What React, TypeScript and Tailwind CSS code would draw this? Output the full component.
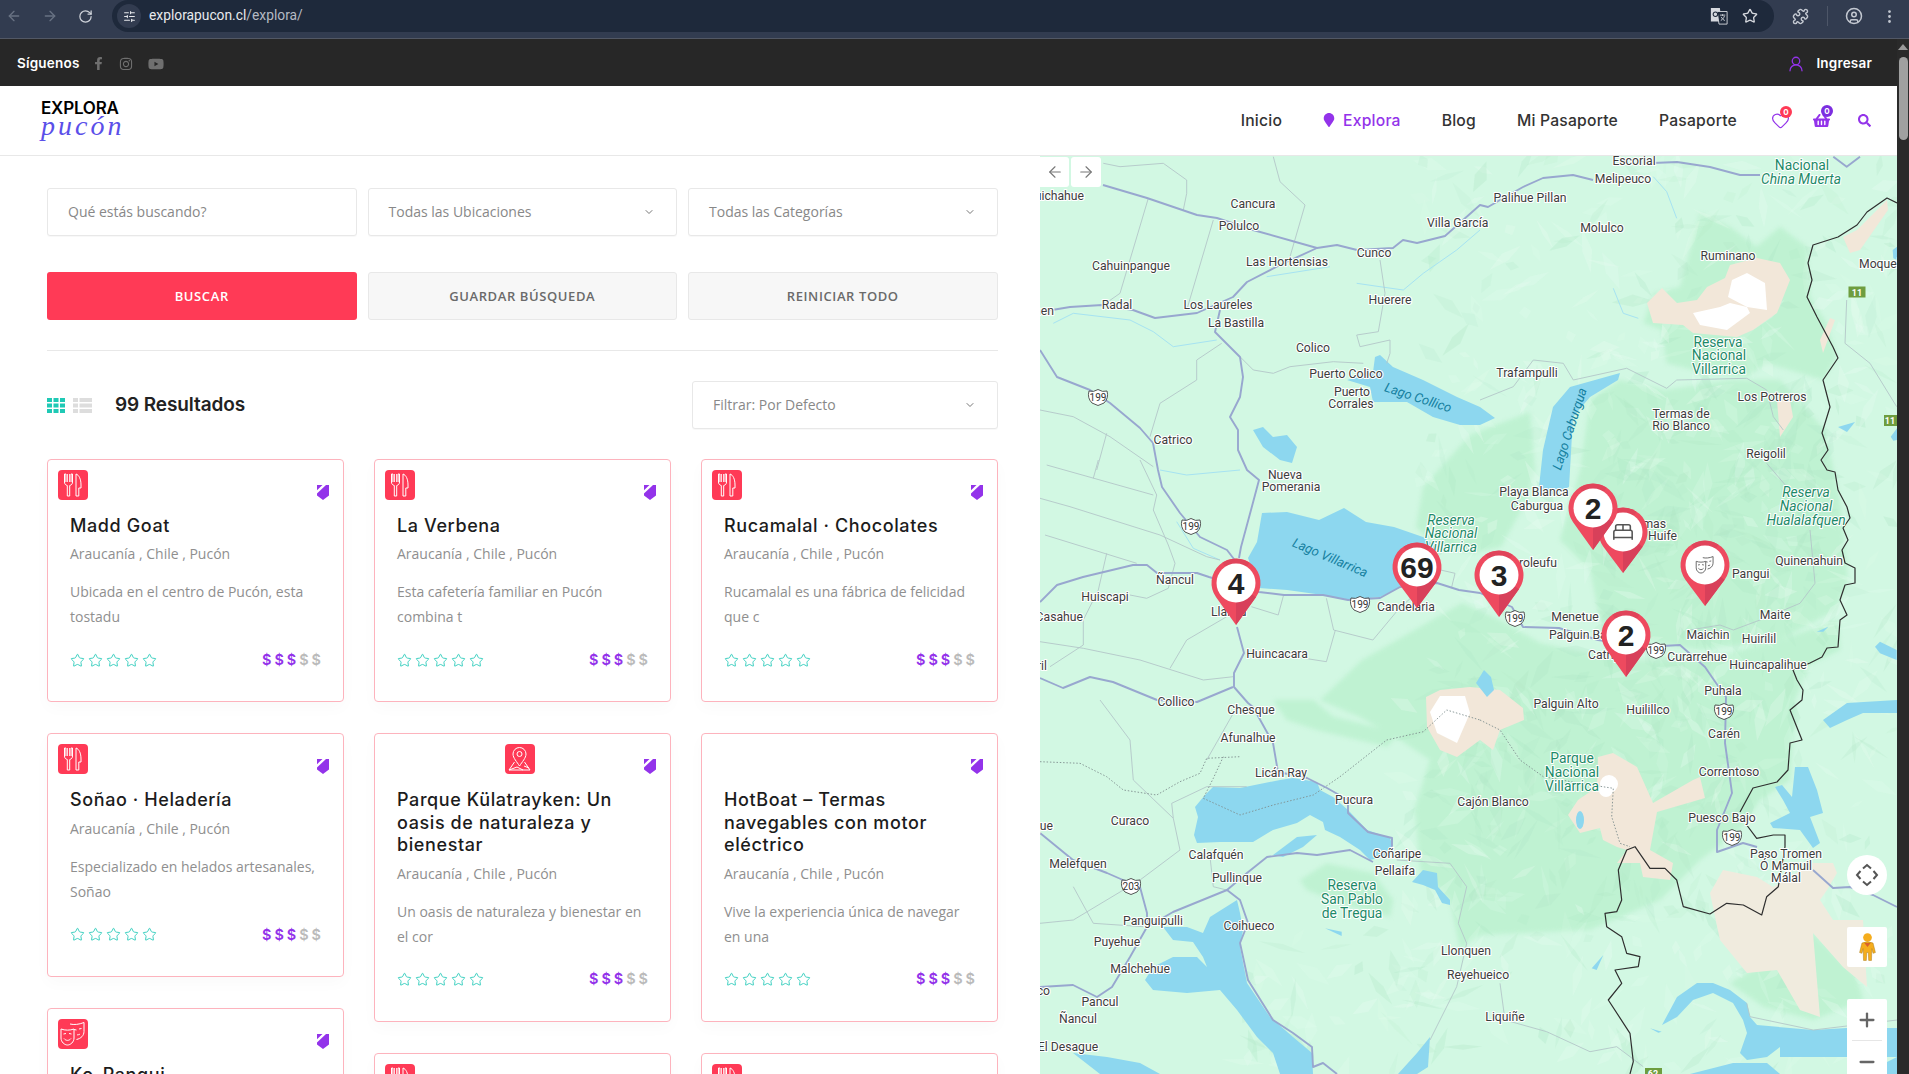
import React from "react";
import { ArrowLeft, ArrowRight, RotateCw, SlidersHorizontal, Star, Puzzle, CircleUser, EllipsisVertical, UserRound, Heart, ChevronDown, Plus, Minus, BedDouble } from "lucide-react";
import { FaFacebookF, FaInstagram, FaYoutube, FaMapMarker, FaShoppingBasket, FaSearch } from "react-icons/fa";

const z = (ox: number, oy: number, s: number, p: string, sy?: number) =>
  p.trim().split(/\s+/).map((t) => {
    const [a, b] = t.split(",").map(Number);
    return `${(ox + a / s).toFixed(1)},${(oy + b / (sy ?? s)).toFixed(1)}`;
  }).join(" ");

/* ---------- small drawn icons ---------- */
const Fork = () => (
  <svg viewBox="0 0 30 30" className="w-[30px] h-[30px]" fill="none" stroke="white" strokeWidth="1">
    <path d="M6.5 4v8c0 2 1 3 2.800 3.500V26h2.400V15.500c1.800-.5 2.800-1.500 2.800-3.500V4h-1.400v8M9.300 4v8M11.700 4v8M6.500 4h1.400v8" />
    <path d="M18 4c3 1 5 5 5 11v3h-2.200v8H18z" />
  </svg>
);
const MapTile = () => (
  <svg viewBox="0 0 30 30" className="w-[30px] h-[30px]" fill="none" stroke="white" strokeWidth="1">
    <path d="M14.500 3.500a6.500 6.500 0 0 1 6.500 6.500c0 4-4 8-6.500 12-2.500-4-6.500-8-6.500-12a6.500 6.500 0 0 1 6.500-6.500z" />
    <circle cx="14.500" cy="10" r="2.500" />
    <path d="M9.500 18L4 26h21l-5.500-8M4 26l8-3 6 3M19 22l5 2" />
  </svg>
);
const Masks = ({ c = "white", w = 1 }: { c?: string; w?: number }) => (
  <svg viewBox="0 0 30 30" className="w-full h-full" fill="none" stroke={c} strokeWidth={w}>
    <path d="M3 10c4 1.500 9 1.500 13 0v9c0 4-3.500 7-6.500 7S3 23 3 19z" />
    <path d="M5.500 15l2.500-.5M11 14.500l2.500.5M6 19.500c2 2.500 5 2.500 7 0" />
    <path d="M12 5c4 1 9 .5 14-1.500v9c0 4-3 7-7.500 8M16 10.500l2.500.5M21 10l2.500-.5M19 16c1-.5 2 0 3-1" />
  </svg>
);
const Shield = () => (
  <svg viewBox="0 0 12 15" className="absolute right-[14px] top-[25px] w-[12px] h-[15px]">
    <path d="M0 0h12v10.500L6 15 0 10.500z" fill="#9333ea" />
    <path d="M5.500 0H9L0 8.500V5.200z" fill="white" />
  </svg>
);
const Prices = () => (
  <div className="flex gap-[4px] font-['Inter',sans-serif] font-semibold text-[14.500px] leading-none">
    {[0, 1, 2, 3, 4].map((i) => (
      <span key={i} className={i < 3 ? "w-[8.400px] text-center text-[#9333ea]" : "w-[8.400px] text-center text-[#bbbbbb]"}>$</span>
    ))}
  </div>
);
const Stars = () => (
  <div className="flex gap-[3px]">
    {[0, 1, 2, 3, 4].map((i) => (
      <Star key={i} size={15} strokeWidth={1.400} className="text-[#25c9b8]" />
    ))}
  </div>
);

type CardT = { t: string; d: string; icon?: "f" | "m" | "t"; ml?: boolean };
const Card = ({ c }: { c: CardT }) => (
  <div className="relative bg-white border border-[#fdb3bd] rounded-[4px] shadow-[0_6px_16px_rgba(0,0,0,0.025)] pt-[10px] pb-[33.500px] shrink-0">
    <Shield />
    <div className={c.ml ? "ml-[130px] h-[30px]" : "ml-[10px] h-[30px]"}>
      {c.icon && (
        <div className="w-[30px] h-[30px] rounded-[4px] bg-[#ff3a56]">
          {c.icon === "f" ? <Fork /> : c.icon === "m" ? <MapTile /> : <Masks />}
        </div>
      )}
    </div>
    <div className="px-[22px] pt-[15px]">
      <h3 className="font-['Inter',sans-serif] font-medium text-[18px] tracking-[0.6px] leading-[22.400px] text-[#1c1c1c]">{c.t}</h3>
      <p className="mt-[5px] font-['Open_Sans',sans-serif] text-[14px] leading-[24px] text-[#8f8f8f]">Araucanía , Chile , Pucón</p>
      <p className="mt-[13px] font-['Open_Sans',sans-serif] text-[14px] leading-[25px] text-[#8f8f8f]">{c.d}</p>
      <div className="mt-[23.500px] flex items-center justify-between pr-[1px]">
        <Stars />
        <Prices />
      </div>
    </div>
  </div>
);

const col1: CardT[] = [
  { t: "Madd Goat", d: "Ubicada en el centro de Pucón, esta tostadu", icon: "f" },
  { t: "Soñao · Heladería", d: "Especializado en helados artesanales, Soñao", icon: "f" },
  { t: "Ko-Pangui", d: "Una experiencia", icon: "t" },
];
const col2: CardT[] = [
  { t: "La Verbena", d: "Esta cafetería familiar en Pucón combina t", icon: "f" },
  { t: "Parque Külatrayken: Un oasis de naturaleza y bienestar", d: "Un oasis de naturaleza y bienestar en el cor", icon: "m", ml: true },
  { t: "Restaurante", d: "Araucanía", icon: "f" },
];
const col3: CardT[] = [
  { t: "Rucamalal · Chocolates", d: "Rucamalal es una fábrica de felicidad que c", icon: "f" },
  { t: "HotBoat – Termas navegables con motor eléctrico", d: "Vive la experiencia única de navegar en una" },
  { t: "Restaurante", d: "Araucanía", icon: "f" },
];

/* ---------- map data, page coordinates ---------- */
const WATER = [
  "1248,558 1257,542 1262,513 1287,512 1319,520 1344,508 1366,522 1394,527 1423,537 1437,547 1430,570 1401,587 1380,597 1351,600 1323,595 1287,590 1259,588",
  "1205,795 1213,787 1240,788 1280,780 1293,778 1317,782 1320,790 1333,797 1348,810 1367,830 1390,838 1393,847 1383,857 1370,860 1360,850 1340,837 1325,830 1323,822 1310,815 1297,823 1273,830 1253,842 1220,842 1197,843 1194,835 1198,817 1195,807",
  "1273,855 1297,837 1317,835 1303,847 1283,857",
  "1163,927 1187,927 1203,933 1210,917 1237,900 1240,913 1243,930 1240,947 1247,983 1270,1017 1293,1037 1312,1053 1313,1074 1280,1074 1273,1053 1257,1037 1237,1010 1220,990 1187,993 1153,990 1145,980 1153,967 1173,957 1197,957 1207,967 1203,957 1193,942 1173,940",
  "1073,1053 1107,1057 1140,1063 1160,1074 1100,1074",
  "1412,882 1423,870 1437,873 1438,887 1450,900 1450,905 1442,903 1435,890 1423,885",
  "1398,1074 1417,1053 1430,1037 1428,1067 1417,1074",
  "1662,1025 1677,997 1697,983 1713,983 1730,990 1747,1003 1750,1017 1757,1025 1813,1030 1847,1028 1897,1028 1897,1057 1847,1057 1780,1057 1780,1047 1767,1057 1747,1060 1740,1053 1747,1033 1743,1020 1733,1003 1713,993 1693,1000 1677,1017",
  "1690,1074 1733,1063 1767,1063 1780,1074",
  "1863,1074 1897,1057 1897,1074",
  "1795,767 1808,767 1817,790 1823,813 1810,817 1820,843 1813,848 1800,830 1773,828 1770,823 1790,813 1783,800 1775,787 1782,785 1792,797",
  "1823,720 1847,703 1897,700 1897,713 1863,713 1847,720 1830,728",
  "1620,373 1618,380 1590,397 1573,417 1570,470 1569,487 1551,495 1539,487 1543,450 1553,407 1570,387",
  "1375,357 1380,355 1393,367 1423,380 1457,397 1480,407 1495,418 1480,425 1460,425 1433,417 1407,402 1373,402 1370,387 1347,380 1373,372",
  "1253,430 1263,427 1273,437 1287,435 1297,447 1292,463 1280,460 1263,447",
  "1476,683 1484,670 1491,677 1494,690 1487,697",
  "1838,427 1855,422 1847,432",
  z(1690, 450, 3, "555,590 570,575 620,600 620,630 570,610"),
  z(1690, 450, 3, "380,545 415,530 400,545"),
  z(1480, 150, 3, "1238,300 1251,290 1251,330 1240,325"),
  z(1480, 150, 3, "1232,860 1251,835 1251,870 1240,872"),
  z(1480, 700, 3, "335,805 370,765 350,810"),
  z(1040, 700, 3, "855,685 905,695 905,708"),
  z(1480, 700, 3, "510,985 545,995 535,998"),
];
const GREEN = [
  z(1480, 150, 3, "660,190 750,230 830,290 900,230 980,290 990,440 1040,520 1070,620 1030,690 860,640 800,680 640,660 560,640 545,540 490,520 520,430 600,410"),
  "1320,700 1362,660 1462,603 1500,620 1540,643 1620,660 1700,660 1780,640 1838,620 1840,650 1810,665 1795,700 1790,780 1760,800 1740,830 1700,860 1660,900 1590,930 1480,935 1460,950 1450,900 1420,870 1415,810 1430,760 1400,740 1360,717",
  "1423,487 1470,435 1530,412 1535,470 1525,503 1501,547 1473,553 1437,547 1416,527",
  "1620,380 1665,390 1730,380 1780,380 1825,430 1840,500 1848,580 1835,610 1780,640 1700,650 1640,640 1600,620 1590,570 1560,540 1580,470 1590,400",
  z(1480, 700, 3, "750,850 1000,700 1130,830 1150,900 1000,960 850,920"),
  z(1040, 700, 3, "780,540 860,490 1000,520 1060,600 1050,650 900,610 800,570"),
  z(1040, 700, 3, "700,0 820,0 880,50 1080,100 1040,140 830,90 740,60"),
  z(1040, 700, 3, "1120,340 1170,180 1320,130 1320,700 1250,640 1280,420"),
];
const PEACH = [
  "1647,303 1662,288 1677,303 1697,300 1707,287 1725,278 1730,265 1757,258 1780,263 1790,280 1777,313 1753,330 1737,337 1693,333 1683,325 1653,323",
  "1843,237 1857,230 1887,200 1888,210 1860,250 1850,253",
  "1820,340 1830,318 1835,320 1823,353",
  "1777,400 1790,400 1793,417 1780,437",
  "1426,697 1440,690 1470,687 1500,690 1523,708 1524,720 1500,730 1493,750 1480,740 1457,757 1440,750 1427,727",
  "1568,815 1578,800 1597,787 1598,757 1613,753 1637,767 1653,803 1693,780 1700,777 1705,798 1657,812 1650,850 1673,863 1670,880 1643,877 1640,863 1617,863 1627,850 1617,847 1603,840 1600,828 1580,833",
];
const SAND = "1710,893 1723,870 1757,877 1773,887 1813,863 1833,863 1837,873 1827,890 1820,900 1833,920 1863,920 1867,987 1843,967 1813,933 1820,1017 1800,1010 1777,970 1747,973 1720,940";
const SNOW = [
  "1728,297 1732,280 1747,273 1765,283 1767,310 1747,307",
  "1693,313 1720,307 1730,303 1747,307 1750,313 1727,330 1700,325",
  "1430,712 1440,696 1465,696 1470,713 1457,743 1437,733",
];
const ROADS = [
  "1103,185 1147,198 1197,215 1217,218 1253,230 1317,248 1337,245 1357,250 1393,248 1403,240 1417,243 1445,236 1480,205 1488,207 1500,200 1523,187 1543,178 1573,175 1593,180",
  "1653,163 1677,162 1710,167 1740,175 1760,175",
  z(1480, 150, 3, "1060,20 1100,50 1140,20"),
  "1040,312 1070,307 1102,305 1133,310 1155,318 1197,313 1233,297 1247,282 1280,265 1317,248",
  "1220,310 1215,332 1240,357 1243,377 1240,397 1230,417 1238,430 1238,450 1247,470 1259,480 1251,510 1241,547 1239,558",
  "1040,350 1057,377 1090,390 1110,403 1140,428 1153,443 1158,470 1162,487 1180,513 1200,537 1227,550 1237,563",
  "1040,602 1057,585 1083,577 1133,565 1147,565 1157,573 1197,573 1209,577 1259,592 1284,595 1323,595 1348,600 1380,598 1400,587 1437,583 1459,590 1480,593 1512,607 1523,627 1559,628 1598,640 1644,647 1680,645 1705,667 1716,683 1726,697 1725,743 1732,793 1717,830 1717,852 1743,843 1757,847",
  "1813,870 1833,888 1850,887 1873,895 1897,907",
  "1237,627 1244,653 1234,673 1234,687 1248,703 1253,707 1273,743 1278,772 1307,778 1327,788 1348,800 1348,813 1368,832 1392,838 1392,847",
  "1373,862 1350,850 1317,855 1297,853 1267,857 1247,873 1227,890 1173,912 1147,927 1130,957 1112,987 1097,997 1073,985 1040,987",
  "1040,833 1073,860 1107,873 1123,880 1140,887 1147,913 1147,927",
  "1227,890 1240,900 1248,923 1240,943 1248,980 1273,1020 1293,1033 1312,1047 1313,1067 1323,1063 1337,1074",
  "1040,678 1063,688 1090,677 1113,682 1157,700 1197,702 1233,687",
];
const BORDER = [
  "1897,203 1887,198 1867,212 1857,225 1838,237 1813,245 1808,263 1812,280 1807,297 1817,317 1833,347 1838,358 1823,380 1830,407 1822,433 1828,450 1821,460 1827,470 1835,472 1838,490 1847,507 1850,518 1843,528 1848,540 1842,550 1845,563 1855,568 1855,583 1845,585 1840,600 1847,615 1840,620 1838,647 1827,648 1822,657 1810,663 1793,670 1797,680 1803,690 1802,700 1790,710 1802,740 1790,743 1788,770 1777,782 1753,788 1740,812",
  z(1480, 700, 3, "800,375 830,415 880,405 915,405 915,440 895,560 860,590 845,645 790,615 740,610 690,642 610,620 600,580 590,540 555,505 510,505 465,440 440,450 415,510 425,600 410,635 375,640 380,680 425,710 440,760 480,770 475,800 405,810 425,850 385,900 450,1000 460,1085 450,1122"),
];
const THIN = [
  z(1040, 460, 3, "20,15 340,105"),
  z(1040, 460, 3, "0,115 90,140 360,225 500,290 540,300"),
  z(1040, 460, 3, "15,225 290,310"),
  z(1040, 460, 3, "175,0 160,55"),
  z(1040, 460, 3, "200,280 175,390 130,480 130,555 30,620"),
  z(1040, 460, 3, "0,545 130,565 300,600 490,660 580,650"),
  z(1040, 460, 3, "270,405 320,415 385,385 405,310 385,255 340,150 350,105 300,0"),
  z(1040, 460, 3, "560,470 440,540 390,625"),
  z(1040, 150, 3, "190,40 240,50 370,40 440,90 440,130 430,180"),
  z(1040, 150, 3, "325,145 240,430 190,465"),
  z(1040, 150, 3, "520,210 440,480"),
  z(1040, 150, 3, "700,20 720,95 795,165 750,320"),
  z(1040, 150, 3, "1020,330 1035,430 1015,545 950,555 960,590 1050,570 1050,610 1040,640"),
  z(1040, 150, 3, "545,580 470,630 470,690 360,760 330,860"),
  z(1040, 150, 3, "600,620 640,660 700,670 750,650 880,635 970,640"),
  z(1040, 150, 3, "200,850 170,960"),
  z(1040, 150, 3, "0,780 100,800 210,860 340,950"),
  z(1480, 150, 3, "0,750 100,710 160,630 250,640 280,690 440,655 560,715 590,690 800,685 860,720 880,800 910,840"),
  z(1480, 150, 3, "1100,450 1095,580 1170,640 1250,770"),
  z(1690, 450, 3, "230,40 290,110"),
  z(1690, 450, 3, "360,240 375,400 330,460 210,510 130,540 90,525 0,540"),
  z(1180, 470, 2.8, "290,375 275,435 200,410", 3),
  z(1180, 470, 2.8, "410,385 430,480 540,510 610,420 730,300 770,310 760,355", 3),
  z(1180, 470, 2.8, "435,480 410,575 290,555", 3),
  z(1040, 700, 3, "180,0 270,120 280,240 400,355 420,450 300,540 100,660 0,670"),
  z(1040, 700, 3, "100,560 160,670 310,680"),
  z(1040, 700, 3, "400,355 395,310 500,260 620,260"),
  z(1040, 700, 3, "510,470 520,560 560,570"),
  z(1040, 700, 3, "580,40 500,180"),
  z(1040, 700, 3, "1070,480 1230,490 1280,560 1255,670 1280,730 1250,860 1170,1020"),
  z(1480, 700, 3, "60,850 75,960 200,995 330,1055 410,1040 490,1100"),
  z(1480, 700, 3, "800,910 810,950 1000,990 1251,960"),
];
const DOTTED = [
  z(1040, 700, 3, "0,185 120,190 200,230 250,270 350,285 420,245 480,220 500,175 600,170"),
  z(1040, 700, 3, "550,170 520,235 490,295 600,345 700,315 820,285 900,230 1040,120 1150,95 1220,30 1320,60"),
  z(1480, 700, 3, "0,60 60,90 120,180 190,230 300,250 400,265 395,350 420,430 450,440"),
];
const RIVERS = [
  z(1480, 150, 3, "400,415 430,490 475,505"),
  z(1480, 150, 3, "520,80 560,125 590,205"),
  z(1040, 150, 3, "40,520 100,490 270,510 340,545 400,590 530,570"),
  z(1040, 150, 3, "950,400 1020,410 1090,420 1150,370 1250,300 1320,240"),
  z(1040, 150, 3, "680,380 870,350"),
  z(1040, 460, 3, "360,30 440,45 600,30"),
  z(1040, 460, 3, "410,185 460,265 540,300"),
];

function shards() {
  let s = 12345;
  const r = () => {
    s = (s * 1664525 + 1013904223) >>> 0;
    return s / 4294967296;
  };
  /* x, y, w, h, count, share of pale facets */
  const boxes = [
    [1420, 156, 477, 560, 420, 0.6],
    [1400, 700, 497, 374, 230, 0.6],
    [1240, 930, 200, 144, 50, 0.6],
    [1600, 385, 235, 255, 170, 0.25],
    [1430, 650, 340, 270, 170, 0.25],
  ];
  const out: { p: string; f: string; o: number }[] = [];
  boxes.forEach(([x, y, w, h, n, pale]) => {
    for (let i = 0; i < n; i++) {
      const cx = x + r() * w;
      const cy = y + r() * h;
      const a = r() * 6.28;
      const l = 6 + r() * 18;
      const b = 2 + r() * 6;
      const pts = [
        [cx + Math.cos(a) * l, cy + Math.sin(a) * l],
        [cx - Math.sin(a) * b, cy + Math.cos(a) * b],
        [cx - Math.cos(a) * l, cy - Math.sin(a) * l],
        [cx + Math.sin(a) * b * 0.7, cy - Math.cos(a) * b * 0.7],
      ];
      out.push({
        p: pts.map((q) => q.map((v) => v.toFixed(1)).join(",")).join(" "),
        f: r() < pale ? "#e9fdf2" : "#aee6c5",
        o: 0.12 + r() * 0.2,
      });
    }
  });
  return out;
}
const SHARDS = shards();

type L = [string, number, number, ("start" | "end")?];
const LABELS: L[] = [
  ["Cancura", 1253, 203], ["Polulco", 1239, 225], ["Villa García", 1427, 222, "start"], ["Cunco", 1374, 252], ["Cahuinpangue", 1131, 265],
  ["Las Hortensias", 1287, 261], ["Radal", 1117, 304], ["Los Laureles", 1218, 304], ["La Bastilla", 1236, 322], ["Huerere", 1390, 299],
  ["Colico", 1313, 347], ["Puerto Colico", 1346, 373], ["Puerto", 1352, 391], ["Corrales", 1351, 403], ["Catrico", 1173, 439],
  ["Quichahue", 1084, 195, "end"], ["Imen", 1054, 310, "end"],
  ["Escorial", 1634, 160], ["Melipeuco", 1623, 178], ["Palihue Pillan", 1530, 197], ["Molulco", 1602, 227], ["Ruminano", 1728, 255],
  ["Trafampulli", 1527, 372], ["Los Potreros", 1772, 396], ["Termas de", 1681, 413], ["Rio Blanco", 1681, 425], ["Reigolil", 1766, 453],
  ["Moquehue", 1859, 263, "start"],
  ["Nueva", 1285, 474], ["Pomerania", 1291, 486], ["Playa Blanca", 1534, 491], ["Caburgua", 1537, 505], ["Termas", 1666, 523, "end"], ["Huife", 1677, 535, "end"],
  ["Pangui", 1732, 573, "start"], ["Quinenahuin", 1809, 560], ["Maite", 1775, 614], ["Maichin", 1708, 634], ["Huirilil", 1759, 638],
  ["Curarrehue", 1727, 656, "end"], ["Huincapalihue", 1768, 664], ["Puhala", 1723, 690],
  ["Ñancul", 1175, 579], ["Huiscapi", 1105, 596], ["Casahue", 1083, 616, "end"], ["Tril", 1047, 665, "end"], ["Collico", 1176, 701],
  ["Llallau", 1211, 611, "start"], ["Candelaria", 1406, 606], ["Caroleufu", 1557, 562, "end"], ["Menetue", 1575, 616], ["Palguin Bajo", 1549, 634, "start"],
  ["Catripulli", 1588, 654, "start"], ["Huincacara", 1277, 653], ["Chesque", 1251, 709], ["Palguin Alto", 1566, 703], ["Huilillco", 1648, 709],
  ["Afunalhue", 1248, 737], ["Licán Ray", 1281, 772], ["Pucura", 1354, 799], ["Cajón Blanco", 1493, 801], ["Curaco", 1130, 820], ["Lique", 1053, 825, "end"],
  ["Calafquén", 1216, 854], ["Coñaripe", 1397, 853], ["Pellaifa", 1395, 870], ["Pullinque", 1237, 877], ["Melefquen", 1078, 863], ["Panguipulli", 1153, 920],
  ["Coihueco", 1249, 925], ["Puyehue", 1117, 941], ["Malchehue", 1140, 968], ["Pirco", 1050, 990, "end"], ["Pancul", 1100, 1001], ["Ñancul", 1078, 1018], ["El Desague", 1068, 1046],
  ["Llonquen", 1466, 950], ["Reyehueico", 1478, 974], ["Liquiñe", 1505, 1016], ["Carén", 1724, 733], ["Correntoso", 1729, 771], ["Puesco Bajo", 1722, 817],
  ["Paso Tromen", 1786, 853], ["Ó Mamuil", 1786, 865], ["Málal", 1786, 877],
];
const GLABELS: [string, number, number, boolean?][] = [
  ["Nacional", 1802, 165], ["China Muerta", 1801, 179, true], ["Reserva", 1718, 342], ["Nacional", 1719, 355], ["Villarrica", 1719, 369],
  ["Reserva", 1451, 520, true], ["Nacional", 1451, 533, true], ["Villarrica", 1451, 547, true],
  ["Reserva", 1806, 492, true], ["Nacional", 1806, 506, true], ["Hualalafquen", 1806, 520, true],
  ["Reserva", 1352, 885], ["San Pablo", 1352, 899], ["de Tregua", 1352, 913],
  ["Parque", 1572, 758], ["Nacional", 1572, 772], ["Villarrica", 1572, 786],
];
const ROUTES: [string, number, number][] = [
  ["199", 1098, 397], ["199", 1191, 526], ["199", 1360, 604], ["199", 1515, 618], ["199", 1656, 650], ["199", 1724, 711], ["199", 1732, 837], ["203", 1131, 886],
];

const Pin = ({ x, y, tip, n, kind }: { x: number; y: number; tip: number; n?: string; kind?: "bed" | "mask" }) => {
  const R = 24.500;
  const d = tip - y;
  const sa = R / d;
  const ca = Math.sqrt(1 - sa * sa);
  const lx = x - R * ca, rx = x + R * ca, ty = y + R * sa;
  return (
    <g>
      <path d={`M${x} ${tip}L${lx} ${ty}A${R} ${R} 0 1 1 ${rx} ${ty}Z`} fill="#ee4a5f" />
      <path d={`M${x} ${tip}L${x} ${y}L${rx} ${ty}Z`} fill="#d8405a" />
      <path d={`M${x - R * 0.55} ${y - R * 0.83}A${R} ${R} 0 0 1 ${x + R * 0.55} ${y - R * 0.83}L${x} ${y}Z`} fill="#e0445a" />
      <circle cx={x} cy={y} r={19.500} fill="white" />
      {n && (
        <text x={x} y={y + 10.500} textAnchor="middle" fontSize={30} fontWeight={700} fontFamily="'Liberation Sans', sans-serif" fill="#222222">{n}</text>
      )}
      {kind === "bed" && <BedDouble x={x - 11} y={y - 11} width={22} height={22} color="#555555" strokeWidth={1.700} />}
      {kind === "mask" && (
        <svg x={x - 11} y={y - 11} width={22} height={22}>
          <Masks c="#666666" w={1.300} />
        </svg>
      )}
    </g>
  );
};

const MapView = () => (
  <svg className="absolute inset-0 w-full h-full" viewBox="1040 156 857 918" preserveAspectRatio="none">
    <rect x="1040" y="156" width="857" height="918" fill="#d2f8e3" />
    <g className="blur-[2px]">
      {GREEN.map((p, i) => <polygon key={i} points={p} fill="#bff2d2" />)}
    </g>
    {SHARDS.map((s, i) => <polygon key={i} points={s.p} fill={s.f} opacity={s.o} />)}
    {PEACH.map((p, i) => <polygon key={i} points={p} fill="#f2e7d9" />)}
    <polygon points={SAND} fill="#f0ebde" />
    {SNOW.map((p, i) => <polygon key={i} points={p} fill="#ffffff" />)}
    <circle cx="1609" cy="784" r="9" fill="white" />
    <circle cx="1606" cy="790" r="7" fill="white" />
    <ellipse cx="1580" cy="820" rx="4" ry="9" fill="#8dd7ef" />
    {WATER.map((p, i) => <polygon key={i} points={p} fill="#8dd7ef" />)}
    {RIVERS.map((p, i) => <polyline key={i} points={p} fill="none" stroke="#a6e3f2" strokeWidth="1" />)}
    {THIN.map((p, i) => <polyline key={i} points={p} fill="none" stroke="#b3c6c8" strokeWidth="0.900" />)}
    {DOTTED.map((p, i) => <polyline key={i} points={p} fill="none" stroke="#7f8f8f" strokeWidth="0.900" strokeDasharray="1.500 1.800" />)}
    {ROADS.map((p, i) => <polyline key={i} points={p} fill="none" stroke="#98a7cf" strokeWidth="1.900" strokeLinejoin="round" />)}
    {BORDER.map((p, i) => <polyline key={i} points={p} fill="none" stroke="#2e2e2e" strokeWidth="1.200" strokeLinejoin="round" />)}

    <rect x="1848.500" y="286.500" width="17" height="11" fill="#6e9d3f" />
    <text x="1857" y="296" textAnchor="middle" fontSize="9" fontWeight="700" fontFamily="Roboto, sans-serif" fill="white">11</text>
    <rect x="1884" y="415" width="13" height="11" fill="#6e9d3f" />
    <text x="1890" y="424" textAnchor="middle" fontSize="9" fontWeight="700" fontFamily="Roboto, sans-serif" fill="white">11</text>
    <rect x="1645" y="1068" width="17" height="6" fill="#6e9d3f" />
    <text x="1653" y="1077" textAnchor="middle" fontSize="9" fontWeight="700" fontFamily="Roboto, sans-serif" fill="white">62</text>

    {ROUTES.map(([t, x, y], i) => (
      <g key={i}>
        <path d={`M${x - 9} ${y - 6}q4.500 1.500 9 -1.500q4.500 3 9 1.500q2 7 -3 12l-6 2.500l-6 -2.500q-5 -5 -3 -12z`} fill="white" stroke="#444444" strokeWidth="0.900" />
        <text x={x} y={y + 3.500} textAnchor="middle" fontSize="10" fontFamily="Roboto, sans-serif" fill="#333333">{t}</text>
      </g>
    ))}

    <g className="[paint-order:stroke]" fontFamily="Roboto, sans-serif" fontSize="12.200" fill="#3d3d3d" stroke="white" strokeWidth="2.200" strokeLinejoin="round">
      {LABELS.map(([t, x, y, a], i) => (
        <text key={i} x={x} y={y + 4.500} textAnchor={a ?? "middle"}>{t}</text>
      ))}
    </g>
    <g className="[paint-order:stroke]" fontFamily="Roboto, sans-serif" fontSize="13.800" fill="#1d8a68" stroke="white" strokeWidth="2" strokeLinejoin="round">
      {GLABELS.map(([t, x, y, it], i) => (
        <text key={i} x={x} y={y + 5} textAnchor="middle" fontStyle={it ? "italic" : "normal"}>{t}</text>
      ))}
    </g>
    <g fontFamily="Roboto, sans-serif" fontSize="13" fontStyle="italic" fill="#15809f" textAnchor="middle">
      <text x="1418" y="402" transform="rotate(18 1418 398)">Lago Collico</text>
      <text x="1570" y="433" transform="rotate(-72 1570 429)">Lago Caburgua</text>
      <text x="1330" y="562" transform="rotate(23 1330 558)">Lago Villarrica</text>
    </g>

    <Pin x={1236} y={583} tip={625} n="4" />
    <Pin x={1417} y={567} tip={608} n="69" />
    <Pin x={1499} y={575} tip={617} n="3" />
    <Pin x={1623} y={532} tip={573} kind="bed" />
    <Pin x={1593} y={508} tip={550} n="2" />
    <Pin x={1705} y={565} tip={606} kind="mask" />
    <Pin x={1626} y={635} tip={677} n="2" />
  </svg>
);

const MapControls = () => (
  <>
    <div className="absolute left-0 top-[1px] flex gap-[2px]">
      <div className="w-[29px] h-[30px] bg-white rounded-r-[3px] flex items-center justify-center"><ArrowLeft size={18} strokeWidth={1.500} className="text-[#777777]" /></div>
      <div className="w-[30px] h-[30px] bg-white rounded-[3px] flex items-center justify-center"><ArrowRight size={18} strokeWidth={1.500} className="text-[#777777]" /></div>
    </div>
    <div className="absolute left-[807px] top-[699px] w-[40px] h-[40px] rounded-full bg-white flex items-center justify-center">
      <svg viewBox="0 0 24 24" className="w-[24px] h-[24px]" fill="none" stroke="#555555" strokeWidth="2">
        <path d="M8 5.500l4-3.500 4 3.500M8 18.500l4 3.500 4-3.500M5.500 8L2 12l3.500 4M18.500 8L22 12l-3.500 4" />
      </svg>
    </div>
    <div className="absolute left-[807px] top-[771px] w-[40px] h-[40px] rounded-[2px] bg-white flex items-center justify-center">
      <svg viewBox="0 0 24 36" className="w-[19px] h-[32px]">
        <circle cx="12" cy="6" r="5.500" fill="#f5ad1d" />
        <path d="M5 13q7-3 14 0l3 12-3 1-1.500-6-.5 15h-3.500l-.5-10h-2l-.5 10H7l-.5-15-1.500 6-3-1z" fill="#f5ad1d" stroke="#a8791a" strokeWidth=".6" />
        <path d="M8 13l4 5 4-5z" fill="#d9602a" />
      </svg>
    </div>
    <div className="absolute left-[807px] top-[843px] w-[40px] h-[90px] rounded-[2px] bg-white flex flex-col items-center">
      <div className="h-[41px] w-full flex items-center justify-center"><Plus size={22} strokeWidth={2.500} className="text-[#666666]" /></div>
      <div className="h-px w-[30px] bg-[#e6e6e6]" />
      <div className="h-[41px] w-full flex items-center justify-center"><Minus size={22} strokeWidth={2.500} className="text-[#666666]" /></div>
    </div>
  </>
);

const Select = ({ label, cls }: { label: string; cls: string }) => (
  <div className={`${cls} h-[48px] bg-white border border-[#e8e8e8] rounded-[3px] pl-[20px] pr-[21px] flex items-center justify-between font-['Open_Sans',sans-serif] text-[14px] text-[#888888] shadow-[0_1px_1px_rgba(0,0,0,0.03)]`}>
    <span className="mb-[1px]">{label}</span>
    <ChevronDown size={12} strokeWidth={2} className="text-[#777777]" />
  </div>
);

const Translate = () => (
  <svg viewBox="0 0 20 20" className="w-[18px] h-[18px]">
    <path d="M1 1h10l1.500 15H1z" fill="#d5d8de" />
    <path d="M8 5h11v14H10z" fill="#1e293b" stroke="#d5d8de" strokeWidth="1" />
    <circle cx="6" cy="8" r="2.500" fill="none" stroke="#1e293b" strokeWidth="1.200" />
    <path d="M11 9h6M14 8v2M12 15c2-1 3.500-3 4-5M12.500 11c1 2 2.500 3.500 4 4" fill="none" stroke="#d5d8de" strokeWidth="1" />
  </svg>
);

export default function App() {
  return (
    <div className="w-[1909px] h-[1074px] overflow-hidden flex flex-col bg-white font-['Inter',sans-serif]">
      {/* browser bar */}
      <div className="h-[39px] shrink-0 bg-[#323c50] border-b border-[#525865] flex items-start">
        <div className="w-[112px] h-[32px] flex items-center gap-[20px] pl-[6px]">
          <ArrowLeft size={16} className="text-[#687283]" />
          <ArrowRight size={16} className="text-[#687283]" />
          <RotateCw size={15} className="text-[#cfd3da]" />
        </div>
        <div className="w-[1662px] h-[32px] bg-[#1e293b] rounded-full flex items-center">
          <div className="ml-[5px] w-[24px] h-[24px] rounded-full bg-[#323c50] flex items-center justify-center">
            <SlidersHorizontal size={13} className="text-[#e6e8ec]" />
          </div>
          <span className="ml-[8px] mb-[2px] font-['Roboto',sans-serif] text-[13.800px] text-[#e8eaed]">explorapucon.cl<span className="text-[#b5bac3]">/explora/</span></span>
          <div className="ml-auto mr-[16px] flex items-center gap-[14px]">
            <Translate />
            <Star size={16} className="text-[#d5d8de]" />
          </div>
        </div>
        <div className="flex-1 h-[32px] flex items-center">
          <Puzzle size={17} className="ml-[18px] text-[#c3c8d1]" />
          <div className="ml-[18px] w-px h-[20px] bg-[#4d5668]" />
          <CircleUser size={18} className="ml-[17px] text-[#c3c8d1]" />
          <EllipsisVertical size={17} className="ml-[18px] text-[#c3c8d1]" />
        </div>
      </div>

      <div className="flex-1 flex min-h-0">
        <div className="w-[1897px] flex flex-col min-h-0">
          {/* social bar */}
          <div className="h-[47px] shrink-0 bg-[#272727] flex items-center pl-[17px] pr-[25px] pt-[2px]">
            <span className="text-[13.500px] font-semibold text-white tracking-[0.2px]">Síguenos</span>
            <FaFacebookF size={13} className="ml-[12px] text-[#6f6f6f]" />
            <FaInstagram size={14} className="ml-[14px] text-[#6f6f6f]" />
            <FaYoutube size={16} className="ml-[15px] text-[#6f6f6f]" />
            <UserRound size={18} strokeWidth={1.700} className="ml-auto text-[#9333ea]" />
            <span className="ml-[11px] text-[13.500px] font-semibold text-white tracking-[0.2px]">Ingresar</span>
          </div>

          {/* header */}
          <div className="h-[70px] shrink-0 bg-white border-b border-[#e8e8e8] flex items-center pl-[41px] pr-[26px]">
            <div className="flex flex-col leading-none mb-[5px]">
              <span className="text-[17px] font-semibold text-black tracking-[-0.2px] leading-[16px]">EXPLORA</span>
              <span className="font-['Liberation_Serif',serif] italic text-[28px] leading-[20px] tracking-[3px] text-[#5b4fe9]">pucón</span>
            </div>
            <nav className="ml-auto flex items-center text-[15.700px] font-medium text-[#333333] tracking-[0.2px]">
              <span>Inicio</span>
              <FaMapMarker size={14} className="ml-[40px] text-[#9333ea]" />
              <span className="ml-[7px] text-[#9333ea]">Explora</span>
              <span className="ml-[41px]">Blog</span>
              <span className="ml-[41px]">Mi Pasaporte</span>
              <span className="ml-[41px]">Pasaporte</span>
            </nav>
            <div className="relative ml-[34px] w-[19px] h-[19px]">
              <Heart size={19} strokeWidth={1.500} className="text-[#9333ea]" />
              <span className="absolute -top-[5px] left-[9px] w-[12px] h-[12px] rounded-full bg-[#ff3a56] text-white text-[8px] font-bold flex items-center justify-center">0</span>
            </div>
            <div className="relative ml-[23px] w-[17px] h-[17px]">
              <FaShoppingBasket size={17} className="text-[#9333ea]" />
              <span className="absolute -top-[7px] left-[8px] w-[12px] h-[12px] rounded-full bg-[#7c2ee0] text-white text-[8px] font-bold flex items-center justify-center">0</span>
            </div>
            <FaSearch size={13} className="ml-[28px] text-[#9333ea]" />
          </div>

          <div className="flex-1 flex min-h-0">
            {/* listing panel */}
            <div className="w-[1040px] shrink-0 overflow-hidden pl-[47px] pr-[42px] pt-[32px]">
              <div className="grid grid-cols-[309.500px_309.500px_309.500px] gap-x-[11px]">
                <div className="h-[48px] bg-white border border-[#e8e8e8] rounded-[3px] pl-[20px] flex items-center font-['Open_Sans',sans-serif] text-[14px] text-[#888888] shadow-[0_1px_1px_rgba(0,0,0,0.03)]"><span className="mb-[1px]">Qué estás buscando?</span></div>
                <Select label="Todas las Ubicaciones" cls="" />
                <Select label="Todas las Categorías" cls="" />
              </div>
              <div className="mt-[36px] grid grid-cols-[309.500px_309.500px_309.500px] gap-x-[11px] font-['Open_Sans',sans-serif] text-[13px] font-semibold tracking-[0.6px]">
                <button className="h-[48px] pt-[1px] rounded-[3px] bg-[#ff3a56] text-white">BUSCAR</button>
                <button className="h-[48px] pt-[1px] rounded-[3px] bg-[#f7f7f7] border border-[#e8e8e8] text-[#6a6a6a]">GUARDAR BÚSQUEDA</button>
                <button className="h-[48px] pt-[1px] rounded-[3px] bg-[#f7f7f7] border border-[#e8e8e8] text-[#6a6a6a]">REINICIAR TODO</button>
              </div>
              <div className="mt-[30px] h-px bg-[#e8e8e8]" />
              <div className="mt-[30px] h-[48px] flex items-center">
                <svg width="18" height="15" viewBox="0 0 18 15" fill="#1fc9b5">
                  <path d="M0 0h5v4H0zM6.500 0h5v4h-5zM13 0h5v4h-5zM0 5.500h5v4H0zM6.500 5.500h5v4h-5zM13 5.500h5v4h-5zM0 11h5v4H0zM6.500 11h5v4h-5zM13 11h5v4h-5z" />
                </svg>
                <svg width="19" height="15" viewBox="0 0 19 15" fill="#dddddd" className="ml-[8px]">
                  <path d="M0 0h5v4H0zM6.500 0H19v4H6.500zM0 5.500h5v4H0zM6.500 5.500H19v4H6.500zM0 11h5v4H0zM6.500 11H19v4H6.500z" />
                </svg>
                <span className="ml-[23px] text-[19px] font-semibold text-[#222222] tracking-[-0.1px]">99 Resultados</span>
                <Select label="Filtrar: Por Defecto" cls="ml-auto w-[306px]" />
              </div>
              <div className="mt-[30px] flex gap-[30px] items-start">
                {[col1, col2, col3].map((col, i) => (
                  <div key={i} className="w-[297px] shrink-0 flex flex-col gap-[31px]">
                    {col.map((c, j) => <Card key={j} c={c} />)}
                  </div>
                ))}
              </div>
            </div>
            {/* map */}
            <div className="relative flex-1 overflow-hidden bg-[#d2f8e3]">
              <MapView />
              <MapControls />
            </div>
          </div>
        </div>
        {/* scrollbar */}
        <div className="w-[12px] shrink-0 bg-[#2a2a2a] flex flex-col items-center pt-[5px]">
          <div className="w-0 h-0 border-l-[5px] border-r-[5px] border-b-[6px] border-l-transparent border-r-transparent border-b-[#9a9a9a]" />
          <div className="mt-[7px] w-[9px] h-[83px] rounded-full bg-[#a0a0a0]" />
        </div>
      </div>
    </div>
  );
}
